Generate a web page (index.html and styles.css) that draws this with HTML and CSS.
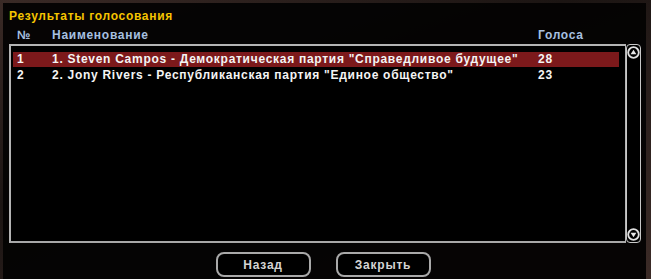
FILE: index.html
```html
<!DOCTYPE html>
<html>
<head>
<meta charset="utf-8">
<link rel="stylesheet" href="styles.css">
</head>
<body>
<div class="dialog">
  <div class="title">Результаты голосования</div>
  <div class="head row">
    <span class="c-num">№</span>
    <span class="c-name">Наименование</span>
    <span class="c-votes">Голоса</span>
  </div>
  <div class="listwrap">
    <div class="list">
      <div class="row item selected">
        <span class="c-num">1</span>
        <span class="c-name">1. Steven Campos - Демократическая партия "Справедливое будущее"</span>
        <span class="c-votes">28</span>
      </div>
      <div class="row item">
        <span class="c-num">2</span>
        <span class="c-name">2. Jony Rivers - Республиканская партия "Единое общество"</span>
        <span class="c-votes">23</span>
      </div>
    </div>
    <div class="scroll">
      <svg class="arrow" width="13" height="13" viewBox="0 0 13 13"><circle cx="6.5" cy="6.5" r="5.3" fill="#000" stroke="#e0e0e0" stroke-width="1.8"/><path d="M3.6 8.2 L6.5 3.8 L9.4 8.2 Z" fill="#e8e8e8"/></svg>
      <svg class="arrow" width="13" height="13" viewBox="0 0 13 13"><circle cx="6.5" cy="6.5" r="5.3" fill="#000" stroke="#e0e0e0" stroke-width="1.8"/><path d="M3.6 4.8 L6.5 9.2 L9.4 4.8 Z" fill="#e8e8e8"/></svg>
    </div>
  </div>
  <div class="buttons">
    <button class="btn">Назад</button>
    <button class="btn">Закрыть</button>
  </div>
</div>
</body>
</html>
```
FILE: styles.css
```css
html, body {
  margin: 0;
  padding: 0;
}
body {
  width: 651px;
  height: 279px;
  overflow: hidden;
  background:
    linear-gradient(160deg, #3a2a26 0%, #1c1513 40%, #2d211e 70%, #3b2b27 100%);
  font-family: "Liberation Sans", Arial, sans-serif;
  font-weight: bold;
  font-size: 12px;
}
.dialog {
  margin: 3px 5px 0 3px;
  height: 276px;
  background: rgba(4, 3, 3, 0.96);
  display: flex;
  flex-direction: column;
  padding-left: 6px;
  box-sizing: border-box;
}
.title {
  color: #f5c400;
  letter-spacing: 0.7px;
  padding: 5px 0 0 0;
  height: 19px;
  line-height: 16px;
}
.row {
  display: grid;
  grid-template-columns: 35px 486px 60px;
  align-items: center;
  letter-spacing: 0.72px;
}
.head {
  color: #a7c0e0;
  padding-left: 8px;
  height: 17px;
  line-height: 15px;
}
.listwrap {
  display: flex;
  height: 199px;
}
.list {
  width: 617px;
  box-sizing: border-box;
  border: 2px solid #b4b4b4;
  border-right-width: 1px;
  border-bottom-color: #a8a8a8;
  background: #000;
  padding: 6px 6px 0 2px;
}
.item {
  color: #f4f4f4;
  height: 15px;
  line-height: 15px;
  padding-left: 4px;
}
.selected {
  background: #7c191b;
  margin-bottom: 1px;
}
.scroll {
  width: 15px;
  box-sizing: border-box;
  border: 1.5px solid #c8c8c8;
  border-radius: 4px;
  display: flex;
  flex-direction: column;
  justify-content: space-between;
  align-items: center;
  padding: 1px 0;
  background: #000;
}
.arrow {
  display: block;
}
.buttons {
  display: flex;
  justify-content: center;
  gap: 25px;
  padding-top: 9px;
  padding-right: 9px;
}
.btn {
  width: 95px;
  height: 25px;
  box-sizing: border-box;
  border: 2px solid #a9a9a9;
  border-radius: 8px;
  background: #000;
  color: #d4d4d4;
  font-family: "Liberation Sans", Arial, sans-serif;
  font-weight: bold;
  font-size: 12px;
  letter-spacing: 0.8px;
  padding: 0;
}
```
